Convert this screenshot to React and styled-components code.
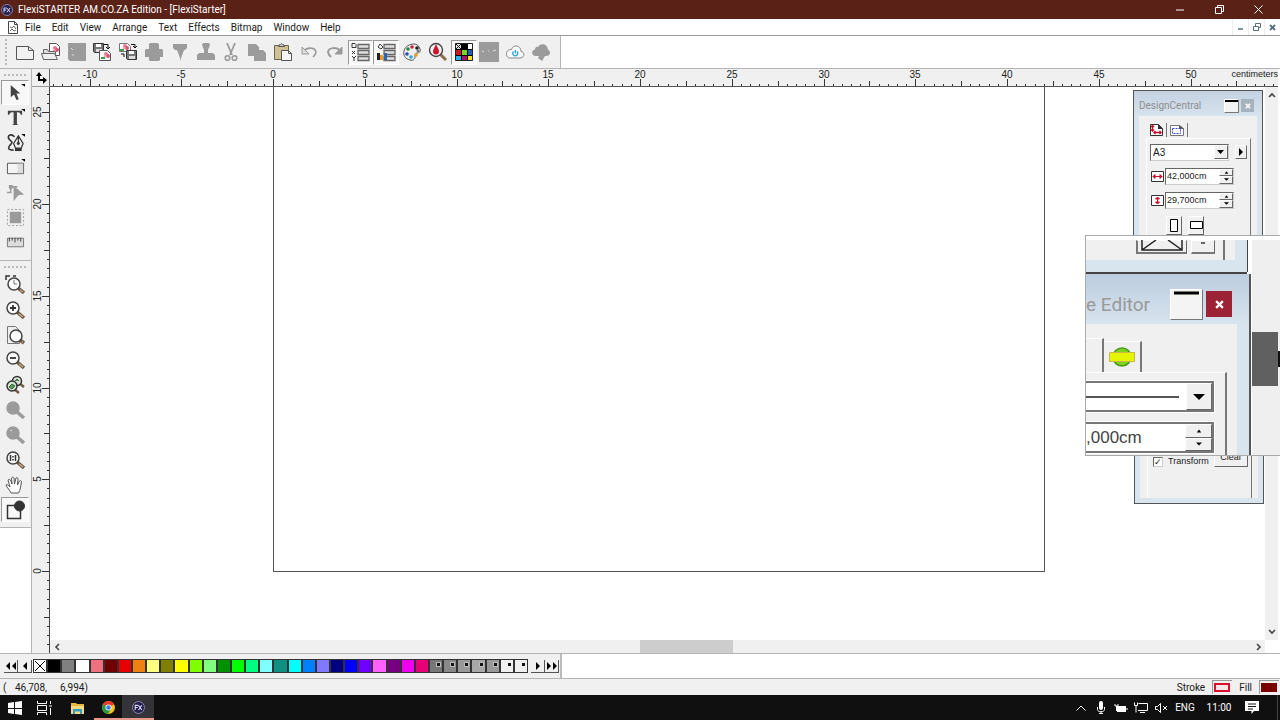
import React, { useState } from "react";
import styled, { createGlobalStyle, css } from "styled-components";

const GlobalStyle = createGlobalStyle`
  *, *::after {
    box-sizing: border-box;
  }

  body {
    margin: 0;
    background: #fff;
    overflow: hidden;
  }

  body, button, input, select {
    font-family: Roboto, "Noto Sans", sans-serif;
    font-size: 10px;
    color: #1a1a1a;
  }

  button {
    border: 0;
    padding: 0;
    background: none;
    display: flex;
    align-items: center;
    justify-content: center;
  }

  svg {
    display: block;
    flex: none;
  }
`;

const Screen = styled.div`
  height: 100vh;
  display: flex;
  flex-direction: column;
`;

const TitleBar = styled.header`
  height: 19px;
  display: flex;
  align-items: center;
  gap: 5px;
  padding: 0 5px 0 1px;
  background: #5a2117;
  color: #fff;
`;

const TitleText = styled.span`
  flex: 1;
  white-space: nowrap;
`;

const WindowButton = styled.button`
  width: 34px;
  height: 19px;
`;

const MenuBar = styled.nav`
  height: 17px;
  display: flex;
  align-items: center;
  padding-left: 7px;
  border-bottom: 1px solid #999;
`;

const MenuList = styled.div`
  flex: 1;
  display: flex;
  gap: 11px;
  margin-left: 6px;
`;

const MenuItem = styled.button`
  height: 16px;
`;

const ChildButton = styled.button`
  width: 16px;
  height: 16px;
  border-left: 1px solid #eee;
`;

const Toolbar = styled.div`
  height: 32px;
  display: flex;
  align-items: center;
  width: 561px;
  padding-left: 5px;
  background: #f0f0f0;
  border-right: 1px solid #b4b4b4;
`;

const Grip = styled.span`
  width: ${(p) => (p.$flat ? "22px" : "2px")};
  height: ${(p) => (p.$flat ? "2px" : "26px")};
  margin: ${(p) => (p.$flat ? "5px 0 4px 3px" : "0 5px 0 0")};
  border: 0 dotted #bbb;
  border-left-width: ${(p) => (p.$flat ? "0" : "2px")};
  border-top-width: ${(p) => (p.$flat ? "2px" : "0")};
`;

const ToolbarButtons = styled.div`
  width: 542px;
  display: grid;
  grid-template-columns: repeat(21, 1fr);
`;

const pressed = css`
  background: #f8f8f8;
  border: 1px solid #fff;
  border-top-color: #999;
  border-left-color: #999;
`;

const ToolButton = styled.button`
  height: 25px;
  ${(p) => p.$pressed && pressed}
`;

const Workspace = styled.main`
  flex: 1;
  min-height: 0;
  display: flex;
  border-top: 1px solid #b4b4b4;
  border-bottom: 1px solid #b4b4b4;
`;

const ToolColumn = styled.aside`
  width: 32px;
  border-right: 1px solid #b4b4b4;
`;

const ToolGroup = styled.div`
  display: flex;
  flex-direction: column;
  padding: 0 2px 5px 1px;
  background: #f0f0f0;
  border-bottom: 1px solid #b4b4b4;
`;

const Editor = styled.section`
  flex: 1;
  min-width: 0;
  display: grid;
  grid-template-columns: 18px 1fr 2px;
  grid-template-rows: 18px 1fr;
  background: #fff;
`;

const RulerCorner = styled.div`
  display: flex;
  align-items: center;
  justify-content: center;
  background: #f0f0f0;
  border-right: 1px solid #666;
  border-bottom: 1px solid #999;
`;

const TopRuler = styled.div`
  position: relative;
  overflow: hidden;
  background: #f0f0f0;
  border-bottom: 1px solid #555;
`;

const SideRuler = styled.div`
  grid-column: 1;
  overflow: hidden;
  background: #f0f0f0;
  border-right: 1px solid #444;
`;

const RulerText = styled.text`
  font-family: "Liberation Sans", Arial, sans-serif;
  font-size: 10px;
  fill: #222;
  text-anchor: middle;
`;

const RulerUnit = styled.span`
  position: absolute;
  top: 0;
  right: 0;
  background: #f0f0f0;
  font: 9px/11px "Liberation Sans", Arial, sans-serif;
`;

const CanvasArea = styled.div`
  position: relative;
  display: grid;
  grid-template-columns: 1fr 13px;
  grid-template-rows: 1fr 13px;
  min-height: 0;
`;

const Canvas = styled.div`
  position: relative;
  overflow: hidden;
`;

const Sheet = styled.div`
  position: absolute;
  left: 223px;
  top: -60px;
  width: 772px;
  height: 545px;
  border: 1px solid #555;
`;

const ScrollBar = styled.div`
  display: flex;
  flex-direction: ${(p) => (p.$vertical ? "column" : "row")};
  justify-content: space-between;
  align-items: stretch;
  background: #f0f0f0;

  button {
    width: 13px;
    height: ${(p) => (p.$vertical ? "16px" : "13px")};
  }
`;

const ScrollThumb = styled.span`
  width: 93px;
  margin-left: 58px;
  background: #cdcdcd;
`;

const PaletteDock = styled.div`
  position: absolute;
  top: 3px;
  right: 14px;
  width: 131px;
  display: flex;
  flex-direction: column;
`;

const Panel = styled.section`
  width: 130px;
  height: ${(p) => (p.$second ? "154px" : "260px")};
  margin-left: ${(p) => (p.$second ? "1px" : "0")};
  display: flex;
  flex-direction: column;
  padding: 0 5px 5px;
  background: linear-gradient(#c3d2e2, #d8e4ee 26px);
  border: 1px solid #555;
`;

const PanelTitle = styled.div`
  height: 25px;
  display: flex;
  align-items: center;
  gap: 2px;
  color: #8f8f8f;
  padding: 4px 3px 0 0;

  span {
    flex: 1;
  }
`;

const PanelMinimize = styled.button`
  width: ${(p) => (p.$large ? "33px" : "15px")};
  height: ${(p) => (p.$large ? "31px" : "14px")};
  align-items: flex-start;
  background: #f4f4f4;
  border: 1px solid #fff;
  border-right-color: #777;
  border-bottom-color: #777;
`;

const PanelClose = styled.button`
  width: ${(p) => (p.$large ? "26px" : "13px")};
  height: ${(p) => (p.$large ? "26px" : "13px")};
  background: ${(p) => (p.$large ? "#9b2335" : "#a7b2bf")};
`;

const PanelBody = styled.div`
  flex: 1;
  display: flex;
  flex-direction: column;
  padding: ${(p) => (p.$end ? "0 6px 0 7px" : "7px 6px 0 7px")};
  background: #f0f0f0;
`;

const Tabs = styled.div`
  display: flex;
  height: 15px;
`;

const Tab = styled.button`
  width: 21px;
  height: 14px;
  border-right: 1px solid #777;
`;

const TabPage = styled.div`
  flex: 1;
  display: flex;
  flex-direction: column;
  gap: 8px;
  padding: 5px 3px;
  border-top: 1px solid #fff;
  border-left: 1px solid #fff;
  border-right: 1px solid #777;
`;

const FieldRow = styled.div`
  display: flex;
  align-items: center;
  gap: ${(p) => p.$gap || 0}px;
  height: 16px;
`;

const sunken = css`
  background: #fff;
  border: 1px solid #666;
  border-right-color: #ccc;
  border-bottom-color: #ccc;
`;

const SelectBox = styled.label`
  width: 79px;
  height: 17px;
  display: flex;
  align-items: center;
  ${sunken}

  select {
    flex: 1;
    min-width: 0;
    appearance: none;
    border: 0;
    padding: 0 2px;
    background: #fff;
    font: 10px/13px "Liberation Sans", Arial, sans-serif;
  }
`;

const raised = css`
  background: #f0f0f0;
  border: 1px solid #fff;
  border-right-color: #666;
  border-bottom-color: #666;
`;

const SmallButton = styled.button`
  width: ${(p) => p.$width}px;
  height: ${(p) => p.$height || 14}px;
  flex: none;
  ${raised}
`;

const OrientationRow = styled.div`
  display: flex;
  gap: 6px;
  padding-left: 16px;
`;

const NumberBox = styled.label`
  width: 69px;
  height: 17px;
  display: flex;
  ${sunken}

  input {
    flex: 1;
    min-width: 0;
    border: 0;
    padding: 0 0 0 1px;
    background: #fff;
    font: 9px/14px "Liberation Sans", Arial, sans-serif;
  }
`;

const Spinner = styled.span`
  width: ${(p) => (p.$large ? "27px" : "14px")};
  display: flex;
  flex-direction: column;

  button {
    flex: 1;
    ${raised}
  }
`;

const TransformRow = styled.div`
  display: flex;
  align-items: flex-end;
  justify-content: space-between;
  margin-top: auto;
  height: 16px;
  margin-bottom: 26px;
  padding-left: 2px;
  font: 9px/11px "Liberation Sans", Arial, sans-serif;

  label {
    display: flex;
    align-items: center;
    gap: 5px;
  }

  input {
    appearance: none;
    width: 10px;
    height: 10px;
    margin: 0;
    ${sunken}
  }

  input:checked::after {
    content: "✓";
    display: block;
    font: bold 9px/8px "DejaVu Sans", sans-serif;
  }

  button {
    width: 34px;
    height: 19px;
    font: inherit;
    ${raised}
  }
`;

const Lens = styled.div`
  position: absolute;
  top: 148px;
  right: -2px;
  width: 195px;
  height: 221px;
  display: flex;
  padding-top: 4px;
  background: #fff;
  border: 1px solid #aaa;
  border-right: 0;
  overflow: hidden;
`;

const LensPanels = styled.div`
  width: 166px;
  flex: none;
  display: flex;
  flex-direction: column;
`;

const LensTop = styled.div`
  width: 161px;
  height: 32px;
  display: flex;
  background: #f0f0f0;
  border-right: 12px solid #d8e4ee;
  border-bottom: 12px solid #d8e4ee;
  box-shadow: 1px 0 #444, 0 2px #444;
`;

const LensTopInner = styled.div`
  flex: 1;
  display: flex;
  gap: 4px;
  height: 20px;
  margin-right: 10px;
  padding: 0 8px 6px 50px;
  border-right: 2px solid #777;
`;

const LensTopButton = styled.button`
  width: ${(p) => p.$width}px;
  height: 14px;
  flex: none;
  align-items: flex-end;
  ${raised}
  border-bottom: 2px solid #777;
  ${(p) => p.$framed && "border-left: 2px solid #777;"}
`;

const LensPanel = styled.div`
  flex: 1;
  width: 165px;
  margin-top: 2px;
  display: flex;
  flex-direction: column;
  background: linear-gradient(#bccddf, #d8e4ee 50px);
  border-right: 2px solid #555;
`;

const LensTitle = styled.div`
  height: 50px;
  display: flex;
  align-items: center;
  gap: 3px;
  padding: 10px 17px 0 0;
  color: #999;
  font-size: 19px;

  span {
    flex: 1;
    white-space: nowrap;
  }
`;

const LensBody = styled.div`
  flex: 1;
  margin-right: 12px;
  background: #f0f0f0;
`;

const LensTabs = styled.div`
  display: flex;
  align-items: flex-end;
  height: 48px;
`;

const LensTab = styled.button`
  width: ${(p) => p.$width}px;
  height: ${(p) => p.$height}px;
  border-right: 2px solid #777;
  border-top: 1px solid #fff;
`;

const LensPage = styled.div`
  display: flex;
  flex-direction: column;
  gap: 10px;
  height: 90px;
  margin-right: 10px;
  padding: 8px 11px 0 0;
  border-top: 1px solid #fff;
  border-right: 2px solid #777;
`;

const LensField = styled.label`
  height: 31px;
  display: flex;
  background: #fff;
  border: 2px solid #777;
  border-left: 0;
  outline: 1px solid #fff;

  input {
    flex: 1;
    min-width: 0;
    border: 0;
    padding: 0;
    background: #fff;
    font: 17px/26px "Liberation Sans", Arial, sans-serif;
    color: #444;
  }
`;

const LineSample = styled.span`
  flex: 1;
  height: 2px;
  margin: 13px 7px 0 0;
  background: #555;
`;

const LensScroll = styled.div`
  flex: 1;
  display: flex;
  align-items: center;
  background: #efefef;
  padding-top: 22px;
`;

const LensThumb = styled.span`
  width: 26px;
  height: 54px;
  background: #606060;
`;

const ColorBar = styled.div`
  height: 24px;
  display: flex;
  align-items: center;
  width: 562px;
  padding-left: 4px;
  background: #f0f0f0;
  border-right: 2px solid #bbb;

  > button {
    width: 14px;
    height: 13px;
    border-right: 1px solid #555;
    border-bottom: 1px solid #555;
  }
`;

const Swatches = styled.div`
  width: 495px;
  display: flex;
  margin: 0 3px 0 1px;
`;

const Swatch = styled.button`
  flex: 1;
  height: 14px;
  background: ${(p) => p.$color};
  border: 1px solid #333;
  align-items: flex-start;
  justify-content: flex-end;
`;

const SpotMark = styled.i`
  width: 3px;
  height: 3px;
  margin: 3px 2px;
  background: #111;
  outline: ${(p) => (p.$light ? "0" : "1px solid #bbb")};
`;

const StatusBar = styled.footer`
  height: 17px;
  display: flex;
  align-items: center;
  gap: 7px;
  padding: 0 1px 0 3px;
  background: #f0f0f0;
  border-top: 1px solid #b4b4b4;
`;

const Coordinates = styled.span`
  flex: 1;
  display: flex;

  span:nth-child(1) {
    width: 12px;
  }

  span:nth-child(2) {
    width: 45px;
  }
`;

const InkBox = styled.span`
  width: 20px;
  height: 14px;
  padding: 2px 1px;
  border-left: 1px solid #999;
  border-top: 1px solid #999;

  &::after {
    content: "";
    display: block;
    width: 16px;
    height: 9px;
    background: ${(p) => p.$fill};
    border: 2px solid ${(p) => p.$line};
  }
`;

const Taskbar = styled.div`
  height: 25px;
  display: flex;
  align-items: center;
  background: #101010;
  color: #fff;
`;

const TaskButton = styled.button`
  width: ${(p) => p.$width || 31}px;
  height: 25px;
  background: ${(p) => (p.$active ? "#333338" : "none")};
  box-shadow: ${(p) => (p.$open ? "inset 0 -2px #e8998a" : "none")};
`;

const Tray = styled.div`
  margin-left: auto;
  display: flex;
  align-items: center;
  height: 25px;
  margin-right: 2px;
  padding-right: 12px;
  border-right: 1px solid #444;
  color: #fff;

  button {
    width: 20px;
    height: 25px;
  }

  button:last-child {
    width: 26px;
  }
`;

const TrayText = styled.span`
  width: ${(p) => p.$width}px;
  text-align: center;
`;

const GREY = "#9b9b9b";

const Icon = ({ size = 20, children }) => (
  <svg width={size} height={size} viewBox="0 0 20 20" fill="none" stroke="#333">
    {children}
  </svg>
);

const Arrow = ({ dir, size = 8 }) => {
  const points = {
    up: "1,6 4,2 7,6",
    down: "0,2 8,2 4,6",
    left: "6,0 6,8 2,4",
    right: "2,0 2,8 6,4",
  };
  return (
    <svg width={size} height={size} viewBox="0 0 8 8">
      <polygon points={points[dir]} fill="#000" />
    </svg>
  );
};

const DoubleArrow = ({ d }) => (
  <svg width="12" height="8" viewBox="0 0 12 8">
    <path d={d} fill="#000" />
  </svg>
);

const Chevron = ({ d }) => (
  <svg width="8" height="8" viewBox="0 0 8 8" fill="none" stroke="#444" strokeWidth="1.6">
    <path d={d} />
  </svg>
);

const FxLogo = ({ size = 12 }) => (
  <svg width={size} height={size} viewBox="0 0 12 12">
    <circle cx="6" cy="6" r="5.5" fill="#26204f" stroke="#9a93bd" strokeWidth=".8" />
    <path d="M3 8.300V4h2.600M3 6h2.200M6 4l3 4.300M9 4L6 8.300" fill="none" stroke="#ddd9f2" strokeWidth="1" />
  </svg>
);

const Flower = ({ x, y }) => (
  <g transform={`translate(${x} ${y})`} stroke="none">
    <circle cx="5" cy="2" r="2" fill="#e77a90" />
    <circle cx="7" cy="4" r="2" fill="#d9536f" />
    <circle cx="4" cy="4" r="1.500" fill="#f3a8b5" />
    <path d="M0 5h4v2H0z" fill="#39a04c" />
  </g>
);

const Floppy = ({ x, y }) => (
  <g transform={`translate(${x} ${y})`}>
    <path d="M.5 .5h10v9h-9l-1-1z" fill="#777" stroke="#333" />
    <path d="M3 1h5v3H3z" fill="#fff" stroke="none" />
    <path d="M3 6h6v3H3z" fill="#ddd" stroke="none" />
  </g>
);

const Lines = ({ top }) => (
  <>
    <path
      d="M8 2.500h11v4H8zM8 8.500h11v4H8zM8 14.500h11v4H8z"
      fill="#e0e0e0"
      stroke="#666"
      strokeWidth="1.300"
    />
    {top}
  </>
);

const toolbarIcons = [
  {
    label: "New",
    art: (
      <>
        <path d="M1.500 4.500h12l5 4v9h-17z" fill="#f2f2f2" stroke="#555" />
        <path d="M13.500 4.500v4h5" stroke="#555" />
      </>
    ),
  },
  {
    label: "Open",
    art: (
      <>
        <path d="M8.500 1.500h7l3 3v9h-10z" fill="#fff" stroke="#555" />
        <Flower x={9} y={4} />
        <path d="M2.500 17.500v-10h4l1 2h7v8z" fill="#ddd" stroke="#666" />
        <path d="M2.500 17.500l-2-6h13l3 6z" fill="#eee" stroke="#666" />
      </>
    ),
  },
  {
    label: "Save",
    art: (
      <>
        <path d="M1 1h18v18H3l-2-2z" fill={GREY} stroke="none" />
        <path d="M4 6l2 2M7 13h-2" stroke="#ddd" />
      </>
    ),
  },
  {
    label: "Import",
    art: (
      <>
        <Floppy x={1} y={1} />
        <path d="M7.500 8.500h8l3 3v7h-11z" fill="#fff" stroke="#555" />
        <Flower x={9} y={10} />
        <path d="M12 2.500h4v4M14 5l2 2 2-2" stroke="#111" />
      </>
    ),
  },
  {
    label: "Export",
    art: (
      <>
        <path d="M1.500 1.500h8l3 3v5h-11z" fill="#fff" stroke="#777" />
        <Flower x={2} y={2} />
        <Floppy x={8} y={8} />
        <path d="M13 2.500h4v3M15 4l2 2 2-2M3 12h3v3" stroke="#111" />
      </>
    ),
  },
  {
    label: "Print",
    art: (
      <path
        d="M6 1h8l1 2v4h3l1 1v7h-3v3l-1 1H6l-1-1v-3H1V8l1-1h3V2z"
        fill={GREY}
        stroke="none"
      />
    ),
  },
  {
    label: "Plot",
    art: <path d="M3 2h14v4l-2 2h-1l-4 11v-3l-3-8H5L3 6z" fill={GREY} stroke="none" />,
  },
  {
    label: "Stamp",
    art: (
      <path
        d="M7 1h6l1 2-2 5v3h5l2 2v5H1v-5l2-2h5V8L6 3z"
        fill={GREY}
        stroke="none"
      />
    ),
  },
  {
    label: "Cut",
    art: (
      <>
        <path d="M6 1l5 12M14 1L9 13" stroke={GREY} strokeWidth="1.800" />
        <circle cx="6.500" cy="16" r="2.300" stroke={GREY} strokeWidth="1.600" />
        <circle cx="13.500" cy="16" r="2.300" stroke={GREY} strokeWidth="1.600" />
      </>
    ),
  },
  {
    label: "Copy",
    art: <path d="M1 2h8l3 3v3h4l3 3v8H7v-5H1z" fill={GREY} stroke="none" />,
  },
  {
    label: "Paste",
    art: (
      <>
        <path d="M1.500 3.500h14v14h-14z" fill="#cfc193" stroke="#6e6747" />
        <path d="M5.500 4.500l1-2h1l1-1 1 1h1l1 2z" fill="#ccc" stroke="#555" />
        <path d="M8.500 8.500h7l3 3v7h-10z" fill="#f4f4f4" stroke="#555" />
        <path d="M15.500 8.500v3h3" stroke="#555" />
      </>
    ),
  },
  {
    label: "Undo",
    art: (
      <>
        <path d="M5 9c3-4 11-4 12 1 0 2-1 3-3 5" stroke={GREY} strokeWidth="1.600" />
        <path d="M3 5v7h7z" fill="#ddd" stroke={GREY} />
      </>
    ),
  },
  {
    label: "Redo",
    art: (
      <>
        <path d="M15 9C12 5 4 5 3 10c0 2 1 3 3 5" stroke={GREY} strokeWidth="2" />
        <path d="M17 5v7h-7z" fill={GREY} stroke={GREY} />
      </>
    ),
  },
  {
    label: "DesignCentral",
    on: true,
    art: (
      <Lines
        top={<path d="M2 1.500h3l1 1v3H2zM2 9l3 3M5 9l-3 3M2 14l2 2 2-2M4 16v3" stroke="#333" />}
      />
    ),
  },
  {
    label: "Fill and stroke editor",
    on: true,
    art: (
      <Lines
        top={
          <>
            <path d="M2 5l2-3 3 3-2 2z" stroke="#333" />
            <path d="M1 11h3v7H1z" fill="#222" stroke="none" />
            <path d="M4 13h3v5H4z" fill="#f09a24" stroke="none" />
            <path d="M8 11h3v7H8z" fill="#2a66b8" stroke="none" />
          </>
        }
      />
    ),
  },
  {
    label: "Colour mixer",
    art: (
      <>
        <path d="M18 7c1 3-1 4-3 4s-2 2-2 4-2 4-5 3C3 17 1 13 2 9c1-5 6-7 10-7 3 0 5 2 6 5z" fill="#eee" stroke="#555" />
        <g stroke="none">
          <circle cx="10" cy="5" r="1.800" fill="#cc2136" />
          <circle cx="6" cy="7" r="1.800" fill="#208a47" />
          <circle cx="5" cy="12" r="1.800" fill="#2948b5" />
          <circle cx="9" cy="15" r="1.800" fill="#24a9d6" />
          <circle cx="14" cy="13" r="1.800" fill="#f09a24" />
          <circle cx="15" cy="6" r="1.800" fill="#222" />
          <circle cx="16" cy="9" r="1.400" fill="#777" />
        </g>
      </>
    ),
  },
  {
    label: "Colour finder",
    art: (
      <>
        <path d="M12 12l6 6" stroke="#8d6c48" strokeWidth="3" />
        <circle cx="8" cy="8" r="6.500" fill="#eef3f6" stroke="#444" strokeWidth="1.400" />
        <path d="M8 2c1 3 3 5 3 7.500a3 3 0 0 1-6 0C5 7 7 5 8 2z" fill="#d2142b" stroke="none" />
      </>
    ),
  },
  {
    label: "Swatch table",
    on: true,
    art: (
      <g stroke="#222">
        <path d="M1.500 1.500h17v17h-17z" fill="#000" />
        <path d="M2 2h5v5H2z" fill="#ddd" stroke="none" />
        <path d="M2 2l5 5M7 2L2 7" />
        <path d="M14 2h4v5h-4z" fill="#fff" stroke="none" />
        <path d="M2 8h5v5H2z" fill="#d2142b" stroke="none" />
        <path d="M8 8h5v5H8z" fill="#7bd42a" stroke="none" />
        <path d="M14 8h4v5h-4z" fill="#1a5fb5" stroke="none" />
        <path d="M2 14h5v4H2z" fill="#27b5e8" stroke="none" />
        <path d="M8 14h5v4H8z" fill="#a8126f" stroke="none" />
        <path d="M14 14h4v4h-4z" fill="#f5e52a" stroke="none" />
      </g>
    ),
  },
  {
    label: "Preview",
    art: (
      <>
        <path d="M0 0h20v20H0z" fill={GREY} stroke="none" />
        <path d="M3 9l2 1M9 9h1M14 9l3-1" stroke="#ddd" />
      </>
    ),
  },
  {
    label: "Cloud",
    art: (
      <>
        <path d="M5 16h10c5 0 5-6 1-6.500C16 3 8 2 6.500 7.500 0 7 0 16 5 16z" fill="#fafafa" stroke="#888" />
        <path d="M8.500 9.500a2.500 2.500 0 1 0 3.500 0M10.300 8v3.500" stroke="#27a5dc" strokeWidth="1.300" />
      </>
    ),
  },
  {
    label: "Cloud upload",
    art: (
      <path
        d="M5 14h3l-1 2 4 3 3-5h1c5 0 5-5 2-6.500C16 1 9 1 7 5 5 4 4 6 4 7.500 0 8 0 14 5 14z"
        fill={GREY}
        stroke="none"
      />
    ),
  },
];

const Corner = () => <path d="M16 1h4v3z" fill="#000" stroke="none" />;

const Magnifier = ({ children, off, x = 8, y = 8 }) => (
  <>
    <path
      d={`M${x + 4} ${y + 4}L19 18`}
      stroke={off ? GREY : "#6f5c48"}
      strokeWidth="3.500"
    />
    {!off && <path d={`M${x + 6} ${y + 6}L18 17`} stroke="#c7a67e" strokeWidth="1.500" />}
    <circle
      cx={x}
      cy={y}
      r="6"
      fill={off ? GREY : "#fafafa"}
      stroke={off ? GREY : "#444"}
      strokeWidth="1.500"
    />
    {children}
  </>
);

const drawTools = [
  {
    label: "Select",
    on: true,
    art: (
      <>
        <path d="M5 2v13l3.500-3 2.500 6 2.500-1-2.500-6H15z" fill="#444" stroke="none" />
        <Corner />
      </>
    ),
  },
  {
    label: "Text",
    art: (
      <>
        <path d="M2 3h15v4h-1.500c-.5-2-1.500-2.500-4-2.500V16c0 1.500 .5 1.500 2 2H6c1.500-.5 2-.5 2-2V4.500C5 4.500 4 5 3.500 7H2z" fill="#444" stroke="none" />
        <Corner />
      </>
    ),
  },
  {
    label: "Path",
    art: (
      <>
        <path d="M9 4C5 0 1 3 3 6s5 3 2 6-4 6 3 6" strokeWidth="1.700" />
        <path d="M13 3l5 8-2 5h-6l-2-5zM13 3v8" fill="#eee" strokeWidth="1.300" />
        <path d="M9.500 16h7v3h-7z" fill="#333" stroke="none" />
        <circle cx="13" cy="11" r="1.200" fill="#333" />
        <Corner />
      </>
    ),
  },
  {
    label: "Rectangle",
    art: (
      <>
        <path d="M1.500 5.500h17v11h-17z" fill="#f4f4f4" stroke="#555" />
        <path d="M12 6h6v10h-6z" fill="#ddd" stroke="none" />
        <Corner />
      </>
    ),
  },
  {
    label: "Edit points",
    art: (
      <>
        <path d="M1 10h4V4h7" stroke={GREY} strokeWidth="1.500" />
        <path d="M3 2h4v4H3zM8 3l11 9-6 1-5 6z" fill={GREY} stroke="none" />
      </>
    ),
  },
  {
    label: "Effects",
    art: (
      <>
        <path d="M4 4h12v12H4z" fill={GREY} stroke="none" />
        <path d="M1.500 1.500h17v17h-17z" stroke={GREY} strokeDasharray="2 2" />
      </>
    ),
  },
  {
    label: "Measure",
    art: (
      <>
        <path d="M1.500 5.500h17v9h-17z" fill="#ddd" stroke="#777" />
        <path d="M3.500 5v4M6.500 5v3M9.500 5v5M12.500 5v3M15.500 5v4" stroke="#444" />
      </>
    ),
  },
];

const viewTools = [
  {
    label: "Zoom",
    art: (
      <>
        <Magnifier x={9} y={9}>
          <path d="M9 5v4h3" stroke="#777" />
        </Magnifier>
        <path d="M1 5V1h4M8 1h3" strokeWidth="1.500" />
      </>
    ),
  },
  {
    label: "Zoom in",
    art: (
      <Magnifier>
        <path d="M8 5v6M5 8h6" strokeWidth="1.800" />
      </Magnifier>
    ),
  },
  {
    label: "Zoom to page",
    art: (
      <>
        <path d="M2.500 1.500h8l4 4v13h-12z" fill="#eee" stroke="#777" />
        <Magnifier x={11} y={11} />
      </>
    ),
  },
  {
    label: "Zoom out",
    art: (
      <Magnifier>
        <path d="M5 8h6" strokeWidth="1.800" />
      </Magnifier>
    ),
  },
  {
    label: "Zoom to selection",
    art: (
      <>
        <path d="M14 8l5 4M9 14l5 4" stroke="#6f5c48" strokeWidth="2.500" />
        <circle cx="12" cy="6" r="4.500" fill="#ddd" strokeWidth="1.500" />
        <circle cx="7" cy="11" r="5" fill="#d5e5d3" strokeWidth="1.500" />
        <path d="M4 12l3-3 3 2-3 3zM10 6l2-2 2 2" fill="#4f9b50" stroke="#3b693c" />
      </>
    ),
  },
  { label: "Zoom previous", art: <Magnifier off /> },
  {
    label: "Zoom next",
    art: (
      <Magnifier off>
        <path d="M5 5l2 1" stroke="#ddd" />
      </Magnifier>
    ),
  },
  {
    label: "Actual size",
    art: (
      <Magnifier>
        <path d="M5.500 5v6M10.500 5v6M8 6v1.500M8 9v1.500" strokeWidth="1.500" />
      </Magnifier>
    ),
  },
  {
    label: "Pan",
    art: (
      <path
        d="M6 18c-1-3-4-5-5-8 1-1 2 0 4 2L3 5c1-1 2-1 3 1l1 3-.5-6c1-1 2-1 2.500 0l.5 6 1.500-6c1-1 2 0 2 1l-.5 6 2-4c1-1 2 0 2 1-1 4-1 8-3 11z"
        fill="#fff"
        stroke="#555"
      />
    ),
  },
  {
    label: "Show fill",
    on: true,
    art: (
      <>
        <path d="M2.500 5.500h13v13h-13z" fill="#f8f8f8" strokeWidth="1.500" />
        <circle cx="14.500" cy="6" r="5" fill="#333" />
      </>
    ),
  },
];

const menus = ["File", "Edit", "View", "Arrange", "Text", "Effects", "Bitmap", "Window", "Help"];

const colors = [
  "#000", "#808080", "#fff", "#f07080", "#700000", "#e80000", "#f08010",
  "#ffff80", "#808000", "#ffff00", "#80ff00", "#80ff80", "#009000", "#00ff00",
  "#00ff80", "#80ffff", "#109080", "#00ffff", "#0080ff", "#8078ff", "#000080",
  "#0000ff", "#7000ff", "#ff60ff", "#780080", "#f000f0", "#e80078",
];

const spotColors = ["#777", "#888", "#999", "#a8a8a8", "#999", "#f0f0f0", "#f0f0f0"];

// one ruler unit is a centimeter
const UNIT = 18.35;

const ticks = (from, to) => {
  const list = [];
  for (let n = from; n <= to; n += 0.5) {
    list.push(n);
  }
  return list;
};

const tickSize = (n) => {
  if (n % 5 === 0) return 7;
  if (n % 2.5 === 0) return 5;
  return 2;
};

const HorizontalRuler = () => (
  <TopRuler>
    <svg width="100%" height="17">
      {ticks(-12, 100).map((n) => {
        const x = Math.round(223 + n * UNIT);
        return (
          <g key={n}>
            <path d={`M${x + 0.5} 17v-${tickSize(n)}`} stroke="#333" />
            {n % 5 === 0 && n <= 50 && (
              <RulerText x={x} y="9">
                {n}
              </RulerText>
            )}
          </g>
        );
      })}
    </svg>
    <RulerUnit>centimeters</RulerUnit>
  </TopRuler>
);

const VerticalRuler = () => (
  <SideRuler>
    <svg width="17" height="100%">
      {ticks(-38, 26).map((n) => {
        const y = Math.round(484 - n * UNIT);
        return (
          <g key={n}>
            <path d={`M17 ${y + 0.5}h-${tickSize(n)}`} stroke="#333" />
            {n % 5 === 0 && n >= 0 && (
              <RulerText transform={`translate(9 ${y}) rotate(-90)`}>{n}</RulerText>
            )}
          </g>
        );
      })}
    </svg>
  </SideRuler>
);

const ToolButtons = ({ items, size }) =>
  items.map((item) => (
    <ToolButton key={item.label} aria-label={item.label} $pressed={item.on}>
      <Icon size={size}>{item.art}</Icon>
    </ToolButton>
  ));

const SizeField = ({ label, path, value, onChange }) => (
  <FieldRow>
    <svg width="15" height="13" viewBox="0 0 15 13">
      <path d="M1.500 1.500h12v10h-12z" fill="#fff" stroke="#333" />
      <path d={path} fill="#c8102e" stroke="#c8102e" />
    </svg>
    <NumberBox>
      <input aria-label={label} value={value} onChange={(e) => onChange(e.target.value)} />
      <Spinner>
        <button aria-label={`Increase ${label}`}>
          <Arrow dir="up" size={5} />
        </button>
        <button aria-label={`Decrease ${label}`}>
          <Arrow dir="down" size={5} />
        </button>
      </Spinner>
    </NumberBox>
  </FieldRow>
);

const CloseMark = ({ size }) => (
  <svg width={size} height={size} viewBox="0 0 8 8" stroke="#fff" strokeWidth="2">
    <path d="M1 1l6 6M7 1L1 7" />
  </svg>
);

const DesignCentral = () => {
  const [width, setWidth] = useState("42,000cm");
  const [height, setHeight] = useState("29,700cm");

  return (
    <Panel>
      <PanelTitle>
        <span>DesignCentral</span>
        <PanelMinimize aria-label="Roll up">
          <svg width="13" height="3">
            <path d="M0 1h13" stroke="#000" strokeWidth="2" />
          </svg>
        </PanelMinimize>
        <PanelClose aria-label="Close">
          <CloseMark size={6} />
        </PanelClose>
      </PanelTitle>
      <PanelBody>
        <Tabs>
          <Tab aria-label="Size">
            <svg width="14" height="12" viewBox="0 0 14 12" fill="none">
              <path d="M1.500 .5h8l4 4v7h-12z" fill="#fff" stroke="#333" />
              <path d="M9 0l5 5H9z" fill="#333" />
              <path
                d="M3.500 1v6M2 3l1.500-1.500L5 3M2 5.500L3.500 7 5 5.500M5 8.500h7M6.500 7L5 8.500 6.500 10M10.500 7L12 8.500 10.500 10"
                stroke="#c8102e"
                strokeWidth="1.400"
              />
            </svg>
          </Tab>
          <Tab aria-label="Margins">
            <svg width="14" height="12" viewBox="0 0 14 12" fill="none">
              <path d="M.5 1.500h9l4 3v7H.5z" fill="#fff" stroke="#777" />
              <path d="M9 1l5 4H9z" fill="#555" />
              <path d="M2.500 4.500h8v5h-8z" stroke="#3b4cc0" strokeDasharray="2 1" />
            </svg>
          </Tab>
        </Tabs>
        <TabPage>
          <FieldRow $gap={6}>
            <SelectBox>
              <select aria-label="Page size" defaultValue="A3">
                <option>A3</option>
                <option>A4</option>
              </select>
              <SmallButton as="span" $width={14}>
                <svg width="12" height="12" viewBox="0 0 12 12">
                  <path d="M2 4h7l-3.500 4z" />
                </svg>
              </SmallButton>
            </SelectBox>
            <SmallButton $width={12} aria-label="More sizes">
              <Arrow dir="right" />
            </SmallButton>
          </FieldRow>
          <SizeField
            label="width"
            path="M3 6.500h9M5 4.500l-2 2 2 2zM10 4.500l2 2-2 2z"
            value={width}
            onChange={setWidth}
          />
          <SizeField
            label="height"
            path="M7.500 3v7M5.500 5l2-2 2 2zM5.500 8l2 2 2-2z"
            value={height}
            onChange={setHeight}
          />
          <OrientationRow>
            <SmallButton $width={16} $height={19} aria-label="Portrait">
              <svg width="9" height="13">
                <path d="M.5 .5h7v12h-7z" fill="#fff" stroke="#000" />
              </svg>
            </SmallButton>
            <SmallButton $width={16} $height={19} aria-label="Landscape">
              <svg width="13" height="9">
                <path d="M.5 .5h12v7H.5z" fill="#fff" stroke="#000" />
              </svg>
            </SmallButton>
          </OrientationRow>
        </TabPage>
      </PanelBody>
    </Panel>
  );
};

const StrokePanel = () => (
  <Panel $second>
    <PanelTitle />
    <PanelBody $end>
      <TabPage>
        <TransformRow>
          <label>
            <input type="checkbox" defaultChecked />
            Transform
          </label>
          <button>Clear</button>
        </TransformRow>
      </TabPage>
    </PanelBody>
  </Panel>
);

const ZoomLens = () => {
  const [stroke, setStroke] = useState(",000cm");

  return (
    <Lens>
      <LensPanels>
        <LensTop>
          <LensTopInner>
            <LensTopButton $width={51} $framed aria-label="No fill">
              <svg width="44" height="12" viewBox="0 0 44 12" stroke="#222" fill="none" strokeWidth="1.500">
                <path d="M2 0v10h40V0M2 10L16 0M42 10L28 0" />
              </svg>
            </LensTopButton>
            <LensTopButton $width={24} aria-label="More">
              <svg width="8" height="10">
                <path d="M2 1h4" stroke="#666" strokeWidth="2" />
              </svg>
            </LensTopButton>
          </LensTopInner>
        </LensTop>
        <LensPanel>
          <LensTitle>
            <span>e Editor</span>
            <PanelMinimize $large aria-label="Roll up">
              <svg width="25" height="5">
                <path d="M0 3h25" stroke="#000" strokeWidth="3" />
              </svg>
            </PanelMinimize>
            <PanelClose $large aria-label="Close">
              <CloseMark size={9} />
            </PanelClose>
          </LensTitle>
          <LensBody>
            <LensTabs>
              <LensTab $width={18} $height={34} aria-label="Fill" />
              <LensTab $width={38} $height={31} aria-label="Stroke">
                <svg width="28" height="22" viewBox="0 0 28 22">
                  <circle cx="14" cy="11" r="9" fill="#7ed321" stroke="#4a9a1a" strokeWidth="1.500" />
                  <path d="M1.500 6.500h25v9h-25z" fill="#e6f500" stroke="#c9b64a" />
                </svg>
              </LensTab>
            </LensTabs>
            <LensPage>
              <LensField as="div">
                <LineSample />
                <SmallButton $width={26} $height={27} aria-label="Line style">
                  <Arrow dir="down" size={12} />
                </SmallButton>
              </LensField>
              <LensField>
                <input
                  aria-label="Stroke width"
                  value={stroke}
                  onChange={(e) => setStroke(e.target.value)}
                />
                <Spinner $large>
                  <button aria-label="Increase stroke">
                    <Arrow dir="up" size={6} />
                  </button>
                  <button aria-label="Decrease stroke">
                    <Arrow dir="down" size={6} />
                  </button>
                </Spinner>
              </LensField>
            </LensPage>
          </LensBody>
        </LensPanel>
      </LensPanels>
      <LensScroll>
        <LensThumb />
        <svg width="2" height="18">
          <path d="M0 1v16h2V1z" fill="#111" />
        </svg>
      </LensScroll>
    </Lens>
  );
};

const App = () => {
  return (
    <Screen>
      <GlobalStyle />
      <TitleBar>
        <FxLogo />
        <TitleText>FlexiSTARTER AM.CO.ZA Edition - [FlexiStarter]</TitleText>
        <WindowButton aria-label="Minimize">
          <svg width="8" height="2">
            <path d="M0 1h8" stroke="#fff" />
          </svg>
        </WindowButton>
        <WindowButton aria-label="Restore">
          <svg width="9" height="9" fill="none" stroke="#fff">
            <path d="M.5 2.500h6v6h-6zM2.500 2.500v-2h6v6h-2" />
          </svg>
        </WindowButton>
        <WindowButton aria-label="Close">
          <svg width="9" height="9" stroke="#fff">
            <path d="M.5 .5l8 8M8.500 .5l-8 8" />
          </svg>
        </WindowButton>
      </TitleBar>

      <MenuBar>
        <svg width="12" height="13" viewBox="0 0 12 13" fill="none" stroke="#444">
          <path d="M1.500 .5h6l3 3v9h-9zM7.500 .5v3h3" />
          <path d="M3 6l2 1 2-2 2 3M3 10l2-2 2 2 2-1" strokeWidth=".8" />
        </svg>
        <MenuList>
          {menus.map((menu) => (
            <MenuItem key={menu}>{menu}</MenuItem>
          ))}
        </MenuList>
        <ChildButton aria-label="Minimize document">
          <svg width="6" height="6">
            <path d="M0 5h5" stroke="#57707f" strokeWidth="1.500" />
          </svg>
        </ChildButton>
        <ChildButton aria-label="Restore document">
          <svg width="8" height="8" fill="none" stroke="#57707f">
            <path d="M.5 3.500h5v4h-5zM2.500 3V.5h5v4H6" />
          </svg>
        </ChildButton>
        <ChildButton aria-label="Close document">
          <svg width="7" height="7" stroke="#57707f" strokeWidth="1.800">
            <path d="M1 1l5 5M6 1L1 6" />
          </svg>
        </ChildButton>
      </MenuBar>

      <Toolbar>
        <Grip />
        <ToolbarButtons>
          <ToolButtons items={toolbarIcons} size={20} />
        </ToolbarButtons>
      </Toolbar>

      <Workspace>
        <ToolColumn>
          <ToolGroup>
            <Grip $flat />
            <ToolButtons items={drawTools} size={19} />
          </ToolGroup>
          <ToolGroup>
            <Grip $flat />
            <ToolButtons items={viewTools} size={20} />
          </ToolGroup>
        </ToolColumn>
        <Editor>
          <RulerCorner>
            <svg width="12" height="12" viewBox="0 0 12 12" fill="#000">
              <path d="M3 3h2v4h4v2H3z" />
              <path d="M1 4l3-4 3 4zM8 5l4 3-4 4z" />
            </svg>
          </RulerCorner>
          <HorizontalRuler />
          <VerticalRuler />
          <CanvasArea>
            <Canvas>
              <Sheet />
            </Canvas>
            <ScrollBar $vertical>
              <button aria-label="Scroll up">
                <Chevron d="M1 6l3-3 3 3" />
              </button>
              <button aria-label="Scroll down">
                <Chevron d="M1 2l3 3 3-3" />
              </button>
            </ScrollBar>
            <ScrollBar>
              <button aria-label="Scroll left">
                <Chevron d="M6 1L3 4l3 3" />
              </button>
              <ScrollThumb />
              <button aria-label="Scroll right">
                <Chevron d="M2 1l3 3-3 3" />
              </button>
            </ScrollBar>
            <PaletteDock>
              <DesignCentral />
              <StrokePanel />
            </PaletteDock>
            <ZoomLens />
          </CanvasArea>
        </Editor>
      </Workspace>

      <ColorBar>
        <button aria-label="First colours">
          <DoubleArrow d="M5 0v8L1 4zM11 0v8L7 4z" />
        </button>
        <button aria-label="Previous colours">
          <Arrow dir="left" />
        </button>
        <Swatches>
          <Swatch $color="#fff" aria-label="No colour">
            <svg width="12" height="12" stroke="#000">
              <path d="M1 1l10 10M11 1L1 11" />
            </svg>
          </Swatch>
          {colors.map((color) => (
            <Swatch key={color} $color={color} aria-label={color} />
          ))}
          {spotColors.map((color, i) => (
            <Swatch key={i} $color={color} aria-label={`Spot ${i + 1}`}>
              <SpotMark $light={i > 4} />
            </Swatch>
          ))}
        </Swatches>
        <button aria-label="Next colours">
          <Arrow dir="right" />
        </button>
        <button aria-label="Last colours">
          <DoubleArrow d="M1 0v8l4-4zM7 0v8l4-4z" />
        </button>
      </ColorBar>

      <StatusBar>
        <Coordinates>
          <span>(</span>
          <span>46,708,</span>
          <span>6,994)</span>
        </Coordinates>
        <span>Stroke</span>
        <InkBox $fill="#f4e6e6" $line="#d8102e" />
        <span>Fill</span>
        <InkBox $fill="#780000" $line="#780000" />
      </StatusBar>

      <Taskbar>
        <TaskButton $width={29} aria-label="Start">
          <svg width="14" height="14" viewBox="0 0 14 14" fill="#fff">
            <path d="M0 2l6-1v6H0zM7 1l7-1v7H7zM0 8h6v5l-6-1zM7 8h7v6l-7-1z" />
          </svg>
        </TaskButton>
        <TaskButton aria-label="Task view">
          <svg width="15" height="14" viewBox="0 0 15 14" fill="none" stroke="#fff">
            <path d="M.5 4.500h9v5h-9zM.5 0v2.500h9V0M.5 14v-2.500h9V14M13.500 0v3M13.500 7v7M12 5h3" />
          </svg>
        </TaskButton>
        <TaskButton $width={34} aria-label="File Explorer">
          <svg width="13" height="12" viewBox="0 0 13 12">
            <path d="M0 1h5l1 1h7v10H0z" fill="#e6b93d" />
            <path d="M0 4h13v8H0z" fill="#f8dc80" />
            <path d="M2 7h9v5H9V9.500H4V12H2z" fill="#3a9bc8" />
          </svg>
        </TaskButton>
        <TaskButton $width={28} $open aria-label="Chrome">
          <svg width="13" height="13" viewBox="0 0 14 14">
            <circle cx="7" cy="7" r="7" fill="#fbc116" />
            <path d="M7 7L1 3.500A7 7 0 0 1 13 3.500z" fill="#e33b2e" />
            <path d="M7 7L1 3.500A7 7 0 0 0 6.500 14L10 8z" fill="#279847" />
            <circle cx="7" cy="7" r="3.300" fill="#fff" />
            <circle cx="7" cy="7" r="2.500" fill="#3f7de8" />
          </svg>
        </TaskButton>
        <TaskButton $width={32} $active $open aria-label="FlexiSTARTER">
          <FxLogo size={13} />
        </TaskButton>
        <Tray>
          <button aria-label="Show hidden icons">
            <svg width="10" height="6" fill="none" stroke="#fff">
              <path d="M.5 5.500L5 1l4.500 4.500" />
            </svg>
          </button>
          <button aria-label="Microphone">
            <svg width="8" height="13" viewBox="0 0 8 13">
              <rect x="2" y="0" width="4" height="9" rx="2" fill="#fff" />
              <path d="M.5 6v2.500c0 3 7 3 7 0V6M4 10.500V13M2 12.500h4" fill="none" stroke="#fff" />
            </svg>
          </button>
          <button aria-label="Battery">
            <svg width="14" height="10" viewBox="0 0 14 10">
              <path d="M3 3h9v6H3zM12.500 5h1v2h-1z" fill="#fff" />
              <path d="M1 1v2h3V1M2.500 3v5" stroke="#fff" fill="none" />
            </svg>
          </button>
          <button aria-label="Network">
            <svg width="14" height="11" viewBox="0 0 14 11" fill="none" stroke="#fff">
              <path d="M4.500 1.500h9v7H4M6 10.500h5M.5 .5v3h3v-3M2 3.500v7" />
            </svg>
          </button>
          <button aria-label="Volume">
            <svg width="13" height="10" viewBox="0 0 13 10" fill="none" stroke="#fff">
              <path d="M.5 3.500h2l3-3v9l-3-3h-2zM8 3l4 4M12 3L8 7" />
            </svg>
          </button>
          <TrayText $width={28}>ENG</TrayText>
          <TrayText $width={40}>11:00</TrayText>
          <button aria-label="Notifications">
            <svg width="14" height="13" viewBox="0 0 14 13">
              <path d="M0 0h14v10H9l-2.500 3v-3H0z" fill="#fff" />
              <path d="M3 3h8M3 5.500h8M3 8h5" stroke="#111" />
            </svg>
          </button>
        </Tray>
      </Taskbar>
    </Screen>
  );
};

export default App;
